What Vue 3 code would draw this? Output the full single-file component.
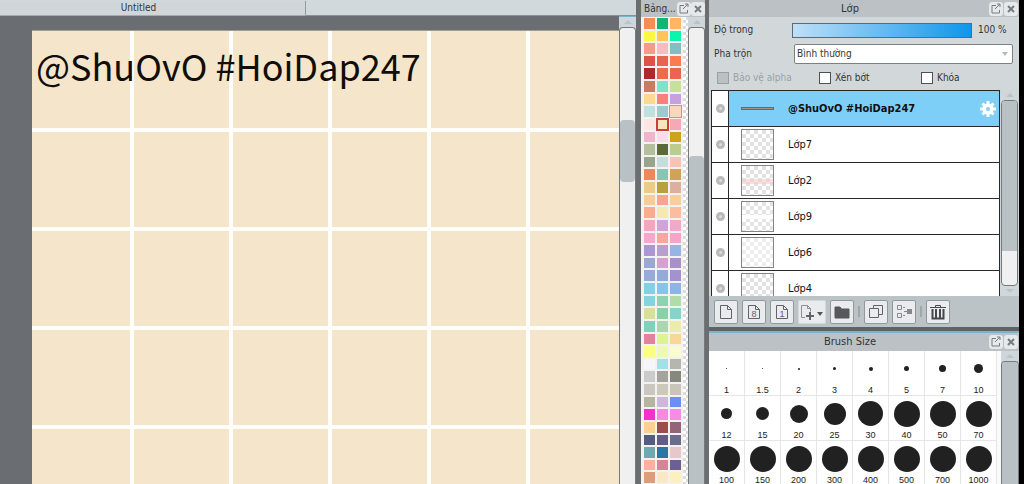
<script setup>
import { ref } from 'vue'

const opacity = ref(100)
const blend = ref('Bình thường')
const blends = ['Bình thường', 'Nhân', 'Thêm']

const swatches = `
f98b54 10b573 fdb663
fdf846 fdc55c 0cf5ae
f79a88 f6bcc0 86bcc2
dc5349 ea6350 fc7b50
b3272b ef6a48 ea6550
c87c60 80e2c6 c6e29a
fcd98c f7827a c8a0dc
c0e0e0 98ccd0 f6d8bc
fbe6e2 fbe3bb f5a8b6
f0b4cc fbdceb cca41c
b4bf9c 5c6a34 bccb90
98a48c c4dedc f6c3b4
ee875c 86c6b4 cfa358
eccb86 b5a142 dbb09e
f9cb98 f8a493 f8cf9c
fbab92 f5e8b0 fbbd9f
f7a5bc d3a2d8 f0a9c8
f6a8cc f8a6a0 f3a6c8
ab98d0 b99ed0 98b4e2
99a8d6 d8a0d0 a890cc
96abd8 94aadb a392cc
80d0e6 88c4ea 8eb4e4
84d4e0 8ed2b2 b0dca8
d6e09c 88d2a8 88d2cc
80d0ba acd6ae ebecac
e480a0 dcf494 fad698
fbff80 eefab4 fbfbd0
f6f5fc a0e2e8 b5b6ad
cbcbcb a4a49c 86887c
c9c7bf cdc8bc c8c5bb
b6b4a0 ccb8dc 6a90f8
f62fcf f58ae0 f78ce6
fcd090 9a4f4c 946478
555c84 635c86 6c6c8c
70a8b0 2c74a4 e6c8c8
fbb0a0 d88498 6c6090
dd9c7c fbe8c6 fcefc0`.trim().split(/\s+/)

const layers = [
  { name: 'Lớp7', mark: '' },
  { name: 'Lớp2', mark: 'pink' },
  { name: 'Lớp9', mark: 'band' },
  { name: 'Lớp6', mark: 'faint' },
  { name: 'Lớp4', mark: '' }
]

const brushes = [
  ['1', 1], ['1.5', 1], ['2', 2], ['3', 3], ['4', 4], ['5', 5], ['7', 7], ['10', 9],
  ['12', 11], ['15', 13], ['20', 18], ['25', 22], ['30', 25], ['40', 26], ['50', 26], ['70', 26],
  ['100', 26], ['150', 26], ['200', 26], ['300', 26], ['400', 26], ['500', 26], ['700', 26], ['1000', 26]
]
</script>

<template>
  <div class="app">
    <main class="workspace">
      <nav class="tabs"><button class="tab">Untitled</button></nav>
      <div class="stage">
        <div class="desk">
          <div class="canvas">
            <i v-for="n in 30" :key="n" class="cell"></i>
            <p class="caption">@ShuOvO #HoiDap247</p>
          </div>
        </div>
        <div class="scroll scroll-canvas">
          <span class="arrow up"></span>
          <div class="track"><div class="thumb"></div></div>
        </div>
      </div>
    </main>

    <section class="palette">
      <header class="head">
        <h2>Bảng...</h2>
        <button class="mini" aria-label="Tách bảng màu">
          <svg viewBox="0 0 14 14"><path d="M7 3.5H3v7.500h7.500V8M6 7l4.500-4.500M8 2h3v3" /></svg>
        </button>
        <button class="mini" aria-label="Đóng bảng màu">
          <svg viewBox="0 0 14 14"><path class="cross" d="M4 4l6 6M10 4l-6 6" /></svg>
        </button>
      </header>
      <div class="palette-body">
        <div class="swatches">
          <button
            v-for="(c, i) in swatches"
            :key="i"
            class="swatch"
            :class="{ chosen: i === 25, near: i === 23 }"
            :style="{ backgroundColor: '#' + c }"
            :aria-label="'#' + c"
          ></button>
        </div>
        <div class="checker"></div>
        <div class="scroll scroll-palette">
          <span class="arrow up"></span>
          <div class="track"><div class="thumb"></div></div>
        </div>
      </div>
    </section>

    <aside class="side">
      <section class="layers">
        <header class="head">
          <h2>Lớp</h2>
          <button class="mini" aria-label="Tách lớp">
            <svg viewBox="0 0 14 14"><path d="M7 3.5H3v7.500h7.500V8M6 7l4.500-4.500M8 2h3v3" /></svg>
          </button>
          <button class="mini" aria-label="Đóng lớp">
            <svg viewBox="0 0 14 14"><path class="cross" d="M4 4l6 6M10 4l-6 6" /></svg>
          </button>
        </header>
        <div class="field">
          <label for="opacity">Độ trong</label>
          <input id="opacity" v-model="opacity" type="range" min="0" max="100" />
          <output for="opacity">{{ opacity }} %</output>
        </div>
        <div class="field">
          <label for="blend">Pha trộn</label>
          <div class="pick">
            <select id="blend" v-model="blend">
              <option v-for="b in blends" :key="b">{{ b }}</option>
            </select>
          </div>
        </div>
        <div class="checks">
          <label class="off"><input type="checkbox" disabled />Bảo vệ alpha</label>
          <label><input type="checkbox" />Xén bớt</label>
          <label><input type="checkbox" />Khóa</label>
        </div>
        <div class="list-wrap">
          <ul class="list">
            <li class="layer active">
              <span class="eye"><i></i></span>
              <span class="strip"></span>
              <span class="name">@ShuOvO #HoiDap247</span>
              <button class="gear" aria-label="Cài đặt lớp">
                <svg viewBox="0 0 18 18">
                  <path d="M9 1v16M1 9h16M3.500 3.500l11 11M14.500 3.500l-11 11" stroke="#fff" stroke-width="3" />
                  <circle cx="9" cy="9" r="5.500" fill="#fff" stroke="none" />
                  <circle cx="9" cy="9" r="2" fill="#80d0f8" stroke="none" />
                </svg>
              </button>
            </li>
            <li v-for="l in layers" :key="l.name" class="layer">
              <span class="eye"><i></i></span>
              <span class="thumbnail" :class="l.mark"></span>
              <span class="name">{{ l.name }}</span>
            </li>
          </ul>
          <div class="scroll scroll-layers">
            <span class="arrow up"></span>
            <div class="track"><div class="thumb"></div></div>
            <span class="arrow down"></span>
          </div>
        </div>
        <div class="tools">
          <button class="tool" aria-label="Lớp mới">
            <svg viewBox="0 0 18 18"><path d="M3.500 2.500h7l4 4v9h-11zM10.500 2.500v4h4" /></svg>
          </button>
          <button class="tool" aria-label="Lớp 8 bit">
            <svg viewBox="0 0 18 18"><path d="M3.500 2.500h7l4 4v9h-11zM10.500 2.500v4h4" /><text x="9" y="14">8</text></svg>
          </button>
          <button class="tool" aria-label="Lớp 1 bit">
            <svg viewBox="0 0 18 18"><path d="M3.500 2.500h7l4 4v9h-11zM10.500 2.500v4h4" /><text x="9" y="14">1</text></svg>
          </button>
          <button class="tool wide" aria-label="Thêm lớp">
            <svg viewBox="0 0 26 18">
              <path d="M6 14.500H2.500v-12h6l3 3v3M8.500 2.500v3h3" stroke="#8b9095" />
              <path d="M11 9v8M7 13h8" stroke-width="2" />
              <path d="M18 9h6l-3 4z" fill="#50555a" stroke="none" />
            </svg>
          </button>
          <button class="tool" aria-label="Thư mục">
            <svg viewBox="0 0 18 18"><path d="M2 4h5l1.500 2H16v9H2z" fill="#55595b" stroke="#55595b" /></svg>
          </button>
          <span class="sep"></span>
          <button class="tool" aria-label="Nhân đôi lớp">
            <svg viewBox="0 0 18 18"><path d="M6.500 2.500h9v9h-9z" /><path d="M2.500 5.500h9v9h-9z" fill="#e9ebec" /></svg>
          </button>
          <button class="tool" aria-label="Gộp lớp">
            <svg viewBox="0 0 18 18">
              <path d="M2.500 2.500h4v4h-4zM2.500 10.500h4v4h-4z" stroke="#85898c" />
              <path d="M8 4.500h2M8 12.500h2M9 8.500h3" stroke="#85898c" />
              <path d="M12 6h5v5h-5z" fill="#85898c" stroke="none" />
            </svg>
          </button>
          <span class="sep"></span>
          <button class="tool" aria-label="Xóa lớp">
            <svg viewBox="0 0 18 18">
              <path d="M1 4.500h16M6.500 4V2.500h5V4" stroke="#45494c" />
              <path d="M3.500 6v9.500h11V6M7 6v9M11 6v9" stroke="#45494c" stroke-width="2" />
            </svg>
          </button>
        </div>
      </section>

      <section class="brush">
        <header class="head">
          <h2>Brush Size</h2>
          <button class="mini" aria-label="Tách cỡ cọ">
            <svg viewBox="0 0 14 14"><path d="M7 3.5H3v7.500h7.500V8M6 7l4.500-4.500M8 2h3v3" /></svg>
          </button>
          <button class="mini" aria-label="Đóng cỡ cọ">
            <svg viewBox="0 0 14 14"><path class="cross" d="M4 4l6 6M10 4l-6 6" /></svg>
          </button>
        </header>
        <div class="brush-body">
          <div class="sizes">
            <button v-for="[label, d] in brushes" :key="label" class="size">
              <span class="dot-box"><i class="dot" :style="{ width: d + 'px', height: d + 'px' }"></i></span>
              <span>{{ label }}</span>
            </button>
          </div>
          <div class="scroll scroll-brush">
            <span class="arrow up"></span>
            <div class="track"><div class="thumb"></div></div>
          </div>
        </div>
      </section>
    </aside>
  </div>
</template>

<style>
body {
  background: #000;
}
</style>

<style scoped>
* {
  box-sizing: border-box;
}
.app {
  display: flex;
  height: 100vh;
  overflow: hidden;
  padding-right: 5px;
  background: #000;
  color: #303437;
  font: 11px/16px "DejaVu Sans Condensed", "DejaVu Sans", "Noto Sans", sans-serif;
}
button {
  margin: 0;
  padding: 0;
  border: 0;
  background: none;
  color: inherit;
  font: inherit;
}
h2,
p,
ul {
  margin: 0;
  padding: 0;
}
svg {
  display: block;
  fill: none;
  stroke: #606468;
}

.workspace {
  flex: 1;
  min-width: 0;
  display: flex;
  flex-direction: column;
}
.tabs {
  flex: none;
  height: 16px;
  background: #d2d9dc;
  border-bottom: 1px solid #8b9093;
}
.tab {
  width: 306px;
  height: 15px;
  padding-right: 28px;
  background: #d0d6d9;
  border-right: 1px solid #94999c;
  border-bottom: 1px solid #a5aaad;
  font-size: 10px;
  line-height: 14px;
}
.stage {
  flex: 1;
  min-height: 0;
  display: flex;
}
.desk {
  flex: 1;
  min-width: 0;
  display: flex;
  padding: 14px 0 0 32px;
  background: #6a6d71;
}
.canvas {
  position: relative;
  flex: 1;
  display: grid;
  grid-template-columns: 98px repeat(4, 95px) 1fr;
  grid-template-rows: 97px repeat(3, 95px) 1fr;
  gap: 4px;
  overflow: hidden;
  border-top: 1px solid #a59b90;
  background: #fffefb;
}
.cell {
  background: #f5e5cb;
}
.caption {
  position: absolute;
  left: 4px;
  top: 10px;
  color: #110d08;
  font: 36px/48px "Noto Sans CJK JP", "Liberation Sans", sans-serif;
  white-space: nowrap;
}

.scroll {
  flex: none;
  display: flex;
  flex-direction: column;
  width: 17px;
  background: #d0d7da;
}
.arrow {
  flex: none;
  height: 10px;
  display: flex;
  align-items: center;
  justify-content: center;
}
.arrow::before {
  content: "";
  border: 4px solid transparent;
  border-top-width: 0;
  border-bottom-color: #bcc3c7;
}
.arrow.down::before {
  border-top: 4px solid #bcc3c7;
  border-bottom-width: 0;
}
.track {
  flex: 1;
  overflow: hidden;
  border: 1px solid #75797c;
  border-bottom: 0;
  border-radius: 4px 4px 0 0;
  background: #f0f0f0;
}
.thumb {
  background: #bac1c5;
}
.scroll-canvas {
  border-top: 1px solid #79b5d1;
}
.scroll-canvas .thumb {
  height: 62px;
  margin-top: 92px;
  border-radius: 4px;
}
.scroll-palette .thumb {
  height: 100%;
  margin-top: 128px;
  border-radius: 4px 4px 0 0;
}

.palette {
  flex: none;
  width: 73px;
  display: flex;
  flex-direction: column;
  border: solid #6a6e71;
  border-width: 0 4px 0 5px;
  background: #e6e9eb;
}
.head {
  flex: none;
  display: flex;
  align-items: center;
  gap: 1px;
  height: 17px;
  padding-right: 1px;
  background: #bbc1c5;
}
.head h2 {
  flex: 1;
  min-width: 0;
  font-size: 11px;
  font-weight: normal;
  text-align: center;
}
.palette .head h2 {
  padding-left: 3px;
  font-size: 10px;
  text-align: left;
}
.palette .head {
  gap: 0;
  padding-right: 0;
}
.mini {
  flex: none;
  width: 14px;
  height: 14px;
  border-radius: 3px;
  background: #e6e9ea;
}
.mini svg {
  stroke: #777b7e;
}
.mini .cross {
  stroke-width: 2;
}
.palette-body {
  flex: 1;
  min-height: 0;
  display: flex;
  background: #f7f7f7;
}
.swatches {
  flex: 1;
  display: grid;
  grid-template-columns: repeat(3, 1fr);
  grid-template-rows: repeat(37, 1fr);
  gap: 2px;
  padding: 1px 2px 1px 3px;
  background: #f4f2f1;
}
.swatch {
  min-width: 0;
  min-height: 0;
}
.swatch.near {
  outline: 1px solid #c89494;
}
.swatch.chosen {
  outline: 2px solid #c8403c;
  outline-offset: -1px;
}
.checker {
  width: 5px;
  background: repeating-conic-gradient(#dcdcdc 0 25%, #fff 0 50%) 0 0 / 6px 6px;
}

.side {
  flex: none;
  width: 310px;
  display: flex;
  flex-direction: column;
  background: #d2d8da;
}
.side .head h2 {
  padding-left: 3px;
}
.layers {
  flex: none;
  border-bottom: 4px solid #5c6468;
}
.field {
  display: flex;
  align-items: center;
  height: 24px;
  padding: 2px 6px 0 5px;
}
.field label {
  flex: none;
  width: 78px;
}
.field input {
  flex: 1;
  min-width: 0;
  height: 15px;
  margin: 0;
  appearance: none;
  border: 1px solid #5b6a75;
  background: linear-gradient(90deg, #bfdff8, #0e96ea);
}
.field input::-webkit-slider-thumb {
  appearance: none;
  width: 1px;
  height: 13px;
}
.field output {
  width: 41px;
  padding-left: 6px;
}
.pick {
  position: relative;
  flex: 1;
  margin-left: 2px;
}
.pick::after {
  content: "";
  position: absolute;
  right: 5px;
  top: 8px;
  border: 3px solid transparent;
  border-top: 4px solid #b5b9bb;
  border-bottom: 0;
  pointer-events: none;
}
.pick select {
  display: block;
  width: 100%;
  height: 20px;
  padding: 0 2px;
  appearance: none;
  border: 1px solid #7b8083;
  border-radius: 2px;
  background: #fff;
  color: inherit;
  font: inherit;
  font-size: 10px;
}
.checks {
  display: grid;
  grid-template-columns: 102px 102px 1fr;
  height: 25px;
  padding: 1px 0 0 8px;
  font-size: 10px;
}
.checks label {
  display: flex;
  align-items: center;
  gap: 4px;
}
.checks input {
  width: 12px;
  height: 12px;
  margin: 0;
  appearance: none;
  border: 1px solid #4c5154;
  background: #fff;
}
.checks .off {
  color: #9ba1a4;
}
.checks .off input {
  border-color: #9a9fa2;
  background: #bcc0c2;
}
.field label,
.field output {
  font-size: 10px;
}
.list-wrap {
  display: flex;
  height: 206px;
  padding-left: 2px;
}
.list {
  flex: 1;
  overflow: hidden;
  border: 1px solid #25292b;
  border-width: 1px 1px 0;
  background: #fff;
  list-style: none;
}
.layer {
  display: flex;
  align-items: center;
  height: 36px;
  border-bottom: 1px solid #25292b;
  color: #111;
}
.eye {
  flex: none;
  display: flex;
  align-items: center;
  justify-content: center;
  width: 17px;
  height: 100%;
  border-right: 1px solid #25292b;
  background: #fff;
}
.eye i {
  width: 9px;
  height: 9px;
  border: 3px solid #b9b9b9;
  border-radius: 50%;
  background: #dedede;
}
.active {
  background: #7ecff8;
  font-weight: bold;
}
.strip {
  width: 33px;
  height: 3px;
  margin-left: 12px;
  border: 1px solid #596e79;
  background: #a19486;
}
.thumbnail {
  width: 33px;
  height: 31px;
  margin-left: 12px;
  border: 1px solid #858585;
  background: repeating-conic-gradient(#e2e2e2 0 25%, #fff 0 50%) 0 0 / 8px 8px;
}
.thumbnail.pink {
  background: linear-gradient(transparent 45%, #f6caca99 45% 62%, transparent 62%), repeating-conic-gradient(#e2e2e2 0 25%, #fff 0 50%) 0 0 / 8px 8px;
}
.thumbnail.band {
  background: linear-gradient(transparent 45%, #fff 45% 58%, transparent 58%), repeating-conic-gradient(#e4e4e4 0 25%, #fff 0 50%) 0 0 / 8px 8px;
}
.thumbnail.faint {
  background: repeating-conic-gradient(#ededed 0 25%, #fff 0 50%) 0 0 / 8px 8px;
}
.name {
  flex: 1;
  margin-left: 14px;
}
.gear {
  width: 18px;
  height: 18px;
  margin-right: 2px;
}
.scroll-layers {
  width: 19px;
  padding: 0 1px;
}
.scroll-layers .track {
  border-bottom: 1px solid #75797c;
  border-radius: 4px;
}
.scroll-layers .thumb {
  height: 150px;
}
.tools {
  display: flex;
  align-items: center;
  height: 31px;
  padding-left: 5px;
  gap: 4px;
  background: #bcc3c6;
}
.tool {
  flex: none;
  display: flex;
  align-items: center;
  justify-content: center;
  width: 24px;
  height: 24px;
  border: 1px solid #92989c;
  border-radius: 2px;
  background: #e9ebec;
}
.tool svg {
  width: 18px;
  height: 18px;
}
.tool text {
  fill: #606468;
  stroke: none;
  font: 9px "Liberation Sans", sans-serif;
  text-anchor: middle;
}
.tool.wide {
  width: 28px;
  border-color: #d3d7d9;
}
.tool.wide svg {
  width: 26px;
}
.sep {
  width: 2px;
  height: 11px;
  background: #a0a6aa;
}

.brush {
  flex: 1;
  min-height: 0;
  display: flex;
  flex-direction: column;
  border-top: 2px solid #7fb2ca;
}
.brush .head {
  height: 18px;
}
.brush-body {
  flex: 1;
  min-height: 0;
  display: flex;
  overflow: hidden;
}
.sizes {
  flex: 1;
  display: grid;
  grid-template-columns: repeat(8, 36px);
  grid-auto-rows: 45px;
  background: #fafafa;
}
.size {
  display: flex;
  flex-direction: column;
  align-items: center;
  border: solid #e6e6e6;
  border-width: 0 1px 1px 0;
  background: #fff;
  color: #222;
  font: 9px/9px "Liberation Sans", sans-serif;
}
.dot-box {
  display: flex;
  align-items: center;
  justify-content: center;
  height: 35px;
}
.dot {
  border-radius: 50%;
  background: #212121;
}
.scroll-brush {
  width: 18px;
}
.scroll-brush .thumb {
  height: 100%;
}
</style>
